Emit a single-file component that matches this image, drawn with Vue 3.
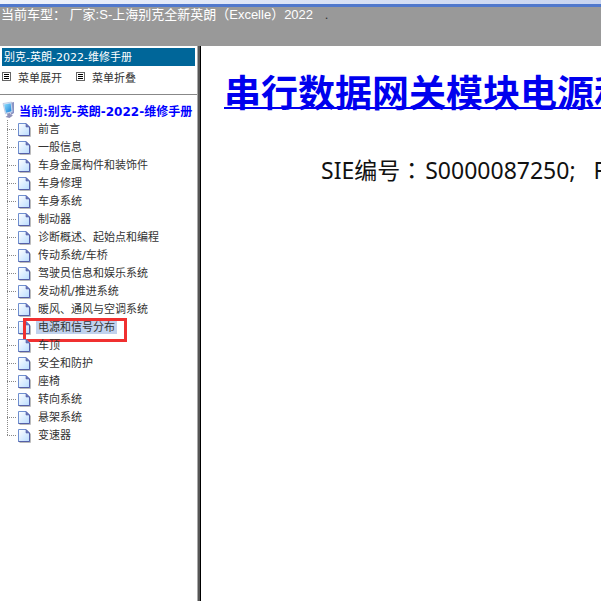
<script setup>
import { ref } from 'vue'

const current = ref('电源和信号分布')
const open = ref(true)

const chapters = [
  '前言',
  '一般信息',
  '车身金属构件和装饰件',
  '车身修理',
  '车身系统',
  '制动器',
  '诊断概述、起始点和编程',
  '传动系统/车桥',
  '驾驶员信息和娱乐系统',
  '发动机/推进系统',
  '暖风、通风与空调系统',
  '电源和信号分布',
  '车顶',
  '安全和防护',
  '座椅',
  '转向系统',
  '悬架系统',
  '变速器',
]
</script>

<template>
  <div class="page">
    <div class="strip"></div>
    <header class="top">当前车型： 厂家:S-上海别克全新英朗（Excelle）2022 <span class="dot">.</span></header>
    <div class="frames">
      <aside class="side">
        <div class="side-title">别克-英朗-2022-维修手册</div>
        <div class="tools">
          <button type="button" @click="open = true">
            <svg width="10" height="10" viewBox="0 0 10 10" shape-rendering="crispEdges">
              <path d="M.5.5h8v8h-8z" fill="#fff" stroke="#666" />
              <path d="M2 2.5h5M2 4.5h5M2 6.5h5" stroke="#000" />
            </svg>
            菜单展开
          </button>
          <button type="button" @click="open = false">
            <svg width="10" height="10" viewBox="0 0 10 10" shape-rendering="crispEdges">
              <path d="M.5.5h8v8h-8z" fill="#fff" stroke="#666" />
              <path d="M2 2.5h5M2 4.5h5M2 6.5h5" stroke="#000" />
            </svg>
            菜单折叠
          </button>
        </div>
        <nav class="tree">
          <a href="#" class="root">
            <svg width="18" height="18" viewBox="0 0 18 18">
              <defs>
                <linearGradient id="screen" x1="0" y1="0" x2="1" y2="1">
                  <stop offset="0" stop-color="#8fe0ff" />
                  <stop offset="1" stop-color="#1b7fd6" />
                </linearGradient>
              </defs>
              <path d="M10 2l4-1v11l-3 2z" fill="#8a93c4" />
              <path d="M3 2.500l8.500-1.500 1 10-7 2z" fill="#dfe8f6" stroke="#9fb3d8" stroke-width=".6" />
              <path d="M4 3.500l6.700-1.200.8 8-5.500 1.500z" fill="url(#screen)" />
              <path d="M7 12.800l3-.8 1 1.800 2 .7-3.500 2.500-4-1 2-1.500z" fill="#8d8fb8" />
            </svg>
            <span>当前:别克-英朗-2022-维修手册</span>
          </a>
          <ul v-show="open">
            <li v-for="name in chapters" :key="name">
              <svg class="doc" width="13" height="15" viewBox="0 0 13 15">
                <defs>
                  <linearGradient id="sheet" x1="0" y1="0" x2="1" y2="1">
                    <stop offset="0" stop-color="#fff" />
                    <stop offset="1" stop-color="#b9dcff" />
                  </linearGradient>
                </defs>
                <path d="M1.500 14.500h11v-9" fill="none" stroke="#bbb" />
                <path d="M.5 1.500h7.500l3.500 3.500v8.500h-11z" fill="url(#sheet)" stroke="#6f8fd0" />
                <path d="M11.500 5v8.500h-11" fill="none" stroke="#5560a8" />
                <path d="M8 1.500v3.500h3.500z" fill="#6a78bb" stroke="#5560a8" stroke-width=".6" />
              </svg>
              <a href="#" :class="{ active: name == current }" @click.prevent="current = name">{{ name }}</a>
              <div v-if="name == current" class="mark"></div>
            </li>
          </ul>
        </nav>
      </aside>
      <div class="splitter"></div>
      <main class="content">
        <h1><a href="#">串行数据网关模块电源和</a></h1>
        <p>SIE编号<span class="colon">：</span>S0000087250;&nbsp;&nbsp; F</p>
      </main>
    </div>
  </div>
</template>

<style>
body {
  margin: 0;
  background: #fff;
}
</style>

<style scoped>
.page {
  display: flex;
  flex-direction: column;
  height: 100vh;
  overflow: hidden;
  font-family: "DejaVu Sans", "Noto Sans CJK SC", sans-serif;
}

.strip {
  flex: none;
  height: 4px;
  background: linear-gradient(90deg, #eef2fb, #c8d4f0);
  border-bottom: 3px solid #5078cc;
}

.top {
  flex: none;
  height: 39px;
  padding-left: 1px;
  background: #999;
  color: #fff;
  font: 13px/15px "Liberation Sans", "Noto Sans CJK SC", sans-serif;
  white-space: nowrap;
}
.dot {
  margin-left: 8px;
  color: #333;
}

.frames {
  flex: 1;
  display: flex;
  min-height: 0;
}

/* 左侧菜单 */
.side {
  flex: none;
  width: 197px;
  font-size: 11px;
  color: #333;
}
.side-title {
  margin: 2px 2px 0;
  padding: 2px 0 0 2px;
  line-height: 16px;
  background: #069;
  color: #fff;
}
.tools {
  display: flex;
  gap: 14px;
  height: 22px;
  padding: 0 2px 6px;
  border-bottom: 1px solid #888;
}
.tools button {
  display: flex;
  align-items: center;
  gap: 6px;
  padding: 0;
  border: 0;
  background: none;
  color: #333;
  font: inherit;
  cursor: pointer;
}

.root {
  display: flex;
  align-items: center;
  gap: 1px;
  height: 18px;
  margin: 6px 0 1px;
  color: #00f;
  font-size: 12px;
  font-weight: bold;
  text-decoration: none;
  white-space: nowrap;
}

.tree ul {
  list-style: none;
  margin: 0;
  padding: 0 0 0 7px;
}
.tree li {
  position: relative;
  display: flex;
  align-items: center;
  height: 18px;
}
/* 虚线连接 */
.tree li::before {
  content: "";
  width: 10px;
  height: 18px;
  margin-right: 1px;
  background:
    repeating-linear-gradient(180deg, #888 0 1px, transparent 1px 2px) 0 0 / 1px 100% no-repeat,
    repeating-linear-gradient(90deg, #888 0 1px, transparent 1px 2px) 0 9px / 100% 1px no-repeat;
}
.tree li:last-child::before {
  background-size: 1px 10px, 100% 1px;
}
.tree li a {
  margin-left: 5px;
  padding: 0 2px;
  line-height: 13px;
  color: #333;
  text-decoration: none;
  white-space: nowrap;
}
.tree li a.active {
  background: #c1d2ee;
}
.mark {
  position: absolute;
  top: 0;
  left: 16px;
  width: 98px;
  height: 18px;
  border: 3px solid #f03030;
  pointer-events: none;
}

.splitter {
  flex: none;
  width: 2px;
  background: #555;
  border-left: 1px solid #aaa;
  border-right: 1px solid #000;
}

/* 右侧正文 */
.content {
  flex: 1;
  min-width: 0;
  overflow: hidden;
  padding: 18px 0 0 23px;
  white-space: nowrap;
}
.content h1 {
  margin: 0;
  font: bold 37px/54px "Noto Sans CJK SC", sans-serif;
}
.content h1 a {
  color: #00e;
  text-decoration: underline;
  text-decoration-thickness: 2px;
  text-underline-offset: 0;
  text-decoration-skip-ink: none;
}
.content p {
  margin: 35px 0 0 97px;
  color: #111;
  font: 23px/32px "Noto Sans", "Noto Sans CJK SC", sans-serif;
}
.colon {
  margin-right: 2px;
  font-family: "Noto Sans CJK TC", sans-serif;
}
</style>
